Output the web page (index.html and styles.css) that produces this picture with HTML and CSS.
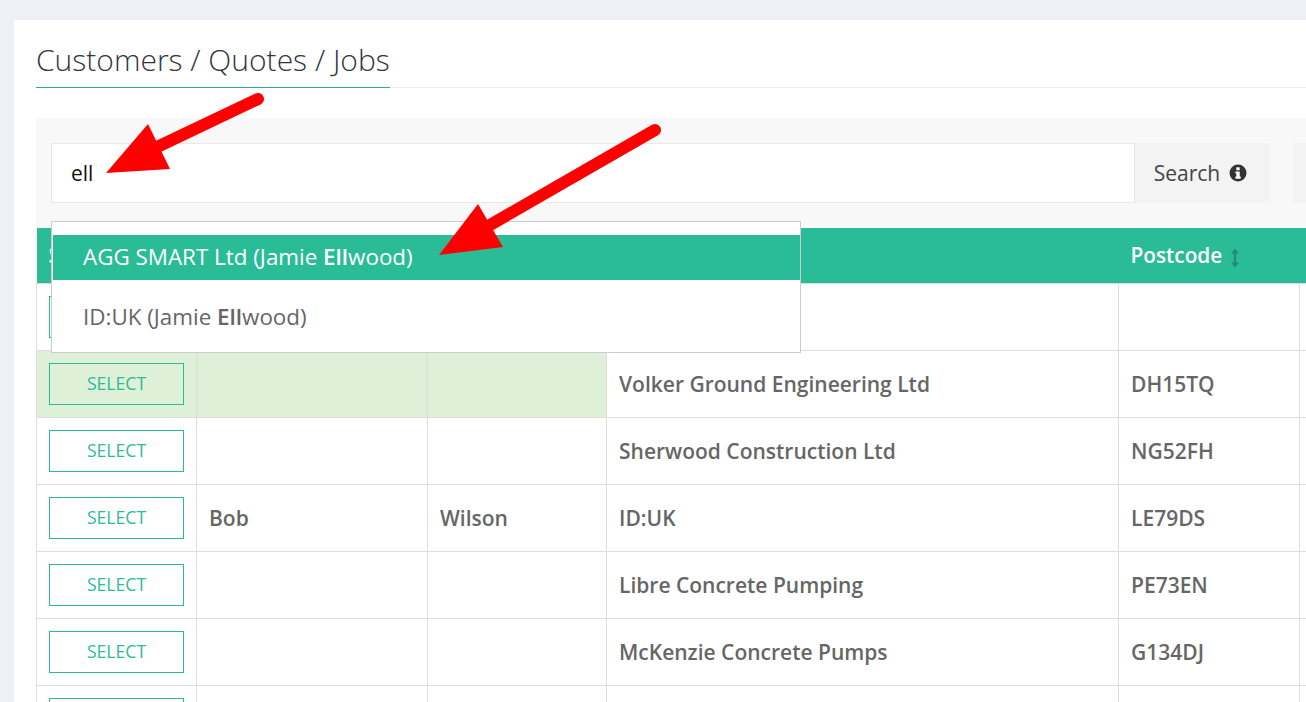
FILE: index.html
```html
<!DOCTYPE html>
<html lang="en">
<head>
  <meta charset="UTF-8">
  <title>Customers / Quotes / Jobs</title>
  <link rel="stylesheet" href="styles.css">
</head>
<body>
  <div class="panel">
    <div class="heading">
      <h2>Customers / Quotes / Jobs</h2>
    </div>

    <div class="search-bar">
      <div class="search-group">
        <input type="text" class="search-input" value="ell">
        <button type="button" class="search-btn">
          Search
          <svg class="info-icon" viewBox="0 0 18 18" aria-hidden="true">
            <circle cx="9" cy="9" r="8.5" fill="#333"/>
            <rect x="7.3" y="3.2" width="3.4" height="3" rx="0.6" fill="#fff"/>
            <path d="M6.4 7.4h4.3v5.2h1v2.1H6.4v-2.1h1v-3.1h-1z" fill="#fff"/>
          </svg>
        </button>
      </div>
      <button type="button" class="other-btn"></button>

      <ul class="suggestions">
        <li class="active">AGG SMART Ltd (Jamie <b>Ell</b>wood)</li>
        <li>ID:UK (Jamie <b>Ell</b>wood)</li>
      </ul>
    </div>

    <table class="customers">
      <colgroup>
        <col class="col-select">
        <col class="col-first">
        <col class="col-last">
        <col class="col-company">
        <col class="col-postcode">
        <col class="col-extra">
      </colgroup>
      <thead>
        <tr>
          <th>Select</th>
          <th>First Name</th>
          <th>Last Name</th>
          <th>Company</th>
          <th>
            Postcode
            <svg class="sort-icon" viewBox="0 0 10 20" aria-hidden="true">
              <path d="M5 0.5 9 5.5H6.2v9H9L5 19.5 1 14.5h2.8v-9H1z" fill="#1f8f72"/>
            </svg>
          </th>
          <th></th>
        </tr>
      </thead>
      <tbody>
        <tr>
          <td><button type="button" class="select-btn">SELECT</button></td>
          <td></td><td></td><td></td><td></td><td></td>
        </tr>
        <tr>
          <td class="picked"><button type="button" class="select-btn">SELECT</button></td>
          <td class="picked"></td>
          <td class="picked"></td>
          <td>Volker Ground Engineering Ltd</td>
          <td>DH15TQ</td>
          <td></td>
        </tr>
        <tr>
          <td><button type="button" class="select-btn">SELECT</button></td>
          <td></td><td></td>
          <td>Sherwood Construction Ltd</td>
          <td>NG52FH</td>
          <td></td>
        </tr>
        <tr>
          <td><button type="button" class="select-btn">SELECT</button></td>
          <td>Bob</td>
          <td>Wilson</td>
          <td>ID:UK</td>
          <td>LE79DS</td>
          <td></td>
        </tr>
        <tr>
          <td><button type="button" class="select-btn">SELECT</button></td>
          <td></td><td></td>
          <td>Libre Concrete Pumping</td>
          <td>PE73EN</td>
          <td></td>
        </tr>
        <tr>
          <td><button type="button" class="select-btn">SELECT</button></td>
          <td></td><td></td>
          <td>McKenzie Concrete Pumps</td>
          <td>G134DJ</td>
          <td></td>
        </tr>
        <tr>
          <td><button type="button" class="select-btn">SELECT</button></td>
          <td></td><td></td><td></td><td></td><td></td>
        </tr>
      </tbody>
    </table>
  </div>

  <!-- red annotation arrows drawn over the screenshot -->
  <svg class="arrows" viewBox="0 0 1306 702" aria-hidden="true">
    <line x1="258" y1="99" x2="155" y2="148" stroke="#f00" stroke-width="12" stroke-linecap="round"/>
    <polygon points="106,173 148,124 170,169" fill="#f00"/>
    <line x1="655" y1="130" x2="490" y2="225" stroke="#f00" stroke-width="12" stroke-linecap="round"/>
    <polygon points="439,255 478,204 503,247" fill="#f00"/>
  </svg>
</body>
</html>
```

FILE: styles.css
```css
* {
  box-sizing: border-box;
}

html, body {
  height: 100%;
}

body {
  font-family: 'Open Sans', sans-serif;
  background-color: #edf0f5;
  color: #666;
  margin: 0;
  padding: 20px 0 0 14px;
  overflow: hidden;
}

.panel {
  background-color: #fff;
  padding: 0 0 0 22px;
  width: 1500px;
  height: 800px;
}

.heading {
  border-bottom: 1px solid #eee;
  height: 68px;
  margin-bottom: 30px;
  display: flex;
}

.heading h2 {
  font-size: 30px;
  font-weight: 300;
  line-height: 41px;
  color: #2f3640;
  margin: 0;
  padding-top: 19px;
  height: 68px;
  border-bottom: 1px solid #2fae8e;
}

.search-bar {
  position: relative;
  background-color: #f8f8f8;
  padding: 25px 15px;
  display: flex;
  gap: 23px;
  height: 110px;
}

.search-group {
  display: flex;
  width: 1219px;
}

.search-input {
  flex: 1;
  height: 60px;
  padding: 0 19px;
  border: 1px solid #e9e9e9;
  background-color: #fff;
  font-family: inherit;
  font-size: 21px;
  color: #111;
  outline: none;
}

.search-btn, .other-btn {
  height: 60px;
  border: none;
  background-color: #f3f3f3;
  font-family: inherit;
  font-size: 21px;
  color: #444;
}

.search-btn {
  width: 135px;
  padding: 0 4px 0 0;
  display: flex;
  align-items: center;
  justify-content: center;
  gap: 9px;
}

.other-btn {
  width: 135px;
}

.info-icon {
  width: 18px;
  height: 18px;
}

.suggestions {
  position: absolute;
  top: 103px;
  left: 15px;
  width: 750px;
  height: 132px;
  z-index: 5;
  list-style: none;
  margin: 0;
  padding: 13px 0 12px 1px;
  background-color: #fff;
  border: 1px solid #ccc;
  display: flex;
  flex-direction: column;
  gap: 14px;
  font-size: 22.4px;
  color: #666;
}

.suggestions li {
  height: 45px;
  line-height: 46px;
  padding-left: 30px;
}

.suggestions li.active {
  background-color: #2abc97;
  color: #fff;
  line-height: 44px;
}

.suggestions b {
  font-weight: 600;
}

.customers {
  border-collapse: collapse;
  table-layout: fixed;
  width: 1400px;
  font-size: 21px;
  font-weight: 600;
}

.col-select { width: 160px; }
.col-first { width: 231px; }
.col-last { width: 179px; }
.col-company { width: 512px; }
.col-postcode { width: 181px; }
.col-extra { width: 137px; }

.customers th {
  background-color: #2abc97;
  color: #fff;
  height: 55px;
  padding: 0 12px;
  text-align: left;
  font-size: 20.8px;
  font-weight: 600;
}

.customers td {
  height: 67px;
  padding: 0 12px;
  border: 1px solid #ddd;
}

.customers td.picked {
  background-color: #dff0d8;
}

.sort-icon {
  width: 10px;
  height: 20px;
  vertical-align: middle;
  margin-left: 2px;
}

.select-btn {
  display: block;
  width: 135px;
  height: 42px;
  padding: 0 0 2px;
  background-color: transparent;
  border: 1px solid #2abc97;
  color: #2abc97;
  font-family: inherit;
  font-size: 17.6px;
}

.arrows {
  position: absolute;
  top: 0;
  left: 0;
  width: 1306px;
  height: 702px;
  z-index: 10;
  pointer-events: none;
}
```
